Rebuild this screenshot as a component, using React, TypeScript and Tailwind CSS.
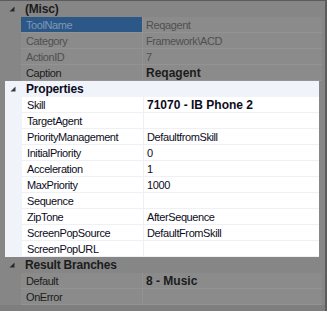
import React from 'react';

type Row = { name: string; value?: string; bold?: boolean; dim?: boolean; selected?: boolean };

const misc: Row[] = [
    { name: 'ToolName', value: 'Reqagent', selected: true, dim: true },
    { name: 'Category', value: 'Framework\\ACD', dim: true },
    { name: 'ActionID', value: '7', dim: true },
    { name: 'Caption', value: 'Reqagent', bold: true },
];

const props: Row[] = [
    { name: 'Skill', value: '71070 - IB Phone 2', bold: true },
    { name: 'TargetAgent' },
    { name: 'PriorityManagement', value: 'DefaultfromSkill' },
    { name: 'InitialPriority', value: '0' },
    { name: 'Acceleration', value: '1' },
    { name: 'MaxPriority', value: '1000' },
    { name: 'Sequence' },
    { name: 'ZipTone', value: 'AfterSequence' },
    { name: 'ScreenPopSource', value: 'DefaultFromSkill' },
    { name: 'ScreenPopURL' },
];

const branches: Row[] = [
    { name: 'Default', value: '8 - Music', bold: true },
    { name: 'OnError' },
];

const Glyph: React.FC<{ light?: boolean }> = ({ light }) => (
    <svg width="6" height="6" viewBox="0 0 6 6" className="block">
        <polygon points="5.5,0.5 5.5,5.5 0.5,5.5" fill={light ? '#3c3c3c' : '#2a2a2a'} />
    </svg>
);

const GrayHeader: React.FC<{ title: string }> = ({ title }) => (
    <div className="flex h-4 items-center">
        <div className="flex w-[21px] shrink-0 justify-start pl-[9px]">
            <Glyph />
        </div>
        <span className="pl-[4px] text-[12px] font-bold tracking-[-0.2px] text-[#1c1c1c]">{title}</span>
    </div>
);

const GrayRow: React.FC<{ row: Row }> = ({ row }) => (
    <div className="flex h-4">
        <div className="w-[21px] shrink-0" />
        <div
            className={`flex w-[122px] shrink-0 items-center border-b border-r border-[#939393] pl-[5px] pt-[1px] text-[11px] tracking-[-0.4px] ${
                row.selected ? 'bg-[#2c5888] text-[#7f97b6]' : row.dim ? 'bg-[#8b8b8b] text-[#505050]' : 'bg-[#8b8b8b] text-[#1c1c1c]'
            }`}
        >
            {row.name}
        </div>
        <div
            className={`flex flex-1 items-center border-b border-[#939393] bg-[#8b8b8b] pl-[3px] pt-[1px] ${
                row.bold ? 'text-[12px] font-bold text-[#1c1c1c]' : 'text-[11px] tracking-[-0.4px] text-[#505050]'
            }`}
        >
            {row.value}
        </div>
    </div>
);

const WhiteRow: React.FC<{ row: Row }> = ({ row }) => (
    <div className="flex h-4">
        <div className="w-[17px] shrink-0 bg-[#f0f4fa]" />
        <div className="flex w-[122px] shrink-0 items-center border-b border-r border-[#eef0f6] bg-white pl-[5px] pt-[1px] text-[11px] tracking-[-0.4px] text-[#0c0c1c]">
            {row.name}
        </div>
        <div
            className={`flex flex-1 items-center border-b border-[#eef0f6] bg-white pl-[3px] pt-[1px] text-[#0c0c1c] ${
                row.bold ? 'text-[12px] font-bold' : 'text-[11px] tracking-[-0.4px]'
            }`}
        >
            {row.value}
        </div>
    </div>
);

export default function App() {
    return (
        <div
            className="flex h-[311px] w-[327px] flex-col overflow-hidden border-t border-r-2 border-[#5c5c5c] bg-[#868686]"
            style={{ fontFamily: '"Liberation Sans", Arial, sans-serif' }}
        >
            <div className="mr-[3px]">
                <GrayHeader title="(Misc)" />
                {misc.map((r) => (
                    <GrayRow key={r.name} row={r} />
                ))}
            </div>

            <div className="ml-[5px] mr-[6px]">
                <div className="flex h-4 items-center bg-[#f0f4fa]">
                    <div className="flex w-[17px] shrink-0 justify-start pl-[5px]">
                        <Glyph light />
                    </div>
                    <span className="pl-[4px] text-[12px] font-bold tracking-[-0.2px] text-[#0c0c1c]">Properties</span>
                </div>
                {props.map((r) => (
                    <WhiteRow key={r.name} row={r} />
                ))}
            </div>

            <div className="mr-[3px]">
                <GrayHeader title="Result Branches" />
                {branches.map((r) => (
                    <GrayRow key={r.name} row={r} />
                ))}
            </div>
            <div className="flex-1 bg-[#7e7e7e]" />
        </div>
    );
}
